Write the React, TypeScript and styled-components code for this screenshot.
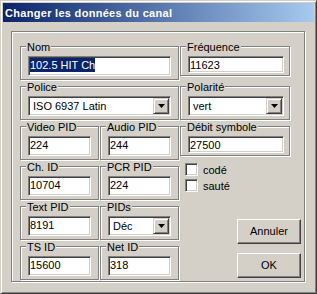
import React from "react";
import styled, { createGlobalStyle } from "styled-components";

const GlobalStyle = createGlobalStyle`
  html, body { margin: 0; padding: 0; background: #d4d0c8; }
  body { font-family: "Liberation Sans", Arial, sans-serif; font-size: 11px; color: #000; }
  * { box-sizing: border-box; }
`;

const Window = styled.div`
  width: 317px;
  height: 294px;
  background: #d4d0c8;
  border: 1px solid;
  border-color: #d4d0c8 #404040 #404040 #d4d0c8;
  box-shadow: inset 1px 1px 0 #fff, inset -1px -1px 0 #808080;
  padding: 2px;
  display: flex;
  flex-direction: column;
`;

const TitleBar = styled.div`
  height: 19px;
  background: linear-gradient(to right, #0a246a, #a6caf0);
  color: #fff;
  font-weight: bold;
  font-size: 11px;
  letter-spacing: 0.3px;
  line-height: 18px;
  padding: 1px 0 0 2px;
  white-space: nowrap;
`;

const Body = styled.div`
  padding: 9px 0 0 8px;
`;

const OuterGroup = styled.div`
  width: 294px;
  height: 251px;
  border: 1px solid #808080;
  box-shadow: inset 1px 1px 0 #fff, 1px 1px 0 #fff;
  padding: 14px 0 0 8px;
  display: flex;
`;

const LeftCol = styled.div`
  width: 160px;
  display: flex;
  flex-direction: column;
  gap: 6px;
`;

const Pair = styled.div`
  display: flex;
  gap: 1px;
`;

const RightCol = styled.div`
  width: 121px;
  display: flex;
  flex-direction: column;
`;

const Group = styled.div<{ $w: number; $h: number; $mb?: number }>`
  position: relative;
  width: ${(p) => p.$w}px;
  height: ${(p) => p.$h}px;
  margin-bottom: ${(p) => p.$mb ?? 0}px;
  border: 1px solid #808080;
  box-shadow: inset 1px 1px 0 #fff, 1px 1px 0 #fff;
  padding: 9px 0 0 7px;
`;

const Caption = styled.span`
  position: absolute;
  top: -6px;
  left: 5px;
  padding: 0 1px;
  line-height: 13px;
  background: #d4d0c8;
  white-space: nowrap;
`;

const Field = styled.div<{ $w: number; $h: number }>`
  width: ${(p) => p.$w}px;
  height: ${(p) => p.$h}px;
  background: #fff;
  border: 1px solid;
  border-color: #808080 #fff #fff #808080;
  box-shadow: inset 1px 1px 0 #404040, inset -1px -1px 0 #d4d0c8;
  padding: 1px 0 0 1px;
  line-height: 14px;
  white-space: nowrap;
  overflow: hidden;
`;

const Selected = styled.span`
  display: inline-block;
  background: #0a246a;
  color: #fff;
  line-height: 14px;
`;

const Combo = styled.div<{ $w: number }>`
  width: ${(p) => p.$w}px;
  height: 20px;
  background: #fff;
  border: 1px solid;
  border-color: #808080 #fff #fff #808080;
  box-shadow: inset 1px 1px 0 #404040, inset -1px -1px 0 #d4d0c8;
  padding: 1px;
  display: flex;
`;

const ComboText = styled.div`
  flex: 1;
  padding: 1px 0 0 3px;
  line-height: 14px;
  white-space: nowrap;
`;

const ArrowButton = styled.div`
  width: 16px;
  height: 16px;
  background: #d4d0c8;
  border: 1px solid;
  border-color: #d4d0c8 #404040 #404040 #d4d0c8;
  box-shadow: inset 1px 1px 0 #fff, inset -1px -1px 0 #808080;
  display: flex;
  align-items: center;
  justify-content: center;
`;

const CheckRow = styled.label<{ $mt: number }>`
  display: flex;
  align-items: center;
  gap: 5px;
  margin: ${(p) => p.$mt}px 0 0 5px;
  height: 13px;
`;

const CheckBox = styled.span`
  width: 13px;
  height: 13px;
  background: #fff;
  border: 1px solid;
  border-color: #808080 #fff #fff #808080;
  box-shadow: inset 1px 1px 0 #404040, inset -1px -1px 0 #d4d0c8;
`;

const Button = styled.div<{ $mt: number }>`
  width: 64px;
  height: 25px;
  margin: ${(p) => p.$mt}px 0 0 auto;
  border: 1px solid;
  border-color: #fff #404040 #404040 #fff;
  box-shadow: inset -1px -1px 0 #808080;
  display: flex;
  align-items: center;
  justify-content: center;
  line-height: 13px;
`;

const Arrow = () => (
  <svg width="7" height="4" viewBox="0 0 7 4">
    <path d="M0 0h7L3.5 4z" fill="#000" />
  </svg>
);

const TextGroup = ({
  label,
  value,
  w = 79,
  fw = 63,
  h = 34,
  fh = 20,
  mb,
}: {
  label: string;
  value: React.ReactNode;
  w?: number;
  fw?: number;
  h?: number;
  fh?: number;
  mb?: number;
}) => (
  <Group $w={w} $h={h} $mb={mb}>
    <Caption>{label}</Caption>
    <Field $w={fw} $h={fh}>{value}</Field>
  </Group>
);

const ComboGroup = ({
  label,
  value,
  w = 79,
  fw = 63,
  mb,
}: {
  label: string;
  value: string;
  w?: number;
  fw?: number;
  mb?: number;
}) => (
  <Group $w={w} $h={34} $mb={mb}>
    <Caption>{label}</Caption>
    <Combo $w={fw}>
      <ComboText>{value}</ComboText>
      <ArrowButton>
        <Arrow />
      </ArrowButton>
    </Combo>
  </Group>
);

export default function App() {
  return (
    <>
      <GlobalStyle />
      <Window>
        <TitleBar>Changer les données du canal</TitleBar>
        <Body>
          <OuterGroup>
            <LeftCol>
              <TextGroup label="Nom" value={<Selected>102.5 HIT Ch</Selected>} w={159} fw={143} />
              <ComboGroup label="Police" value="ISO 6937 Latin" w={159} fw={143} />
              <Pair>
                <TextGroup label="Video PID" value="224" />
                <TextGroup label="Audio PID" value="244" />
              </Pair>
              <Pair>
                <TextGroup label="Ch. ID" value="10704" />
                <TextGroup label="PCR PID" value="224" />
              </Pair>
              <Pair>
                <TextGroup label="Text PID" value="8191" />
                <ComboGroup label="PIDs" value="Déc" />
              </Pair>
              <Pair>
                <TextGroup label="TS ID" value="15600" />
                <TextGroup label="Net ID" value="318" />
              </Pair>
            </LeftCol>
            <RightCol>
              <TextGroup label="Fréquence" value="11623" w={110} fw={96} h={30} fh={17} mb={10} />
              <ComboGroup label="Polarité" value="vert" w={110} fw={96} mb={6} />
              <TextGroup label="Débit symbole" value="27500" w={110} fw={96} h={30} fh={17} />
              <CheckRow $mt={7}>
                <CheckBox />
                codé
              </CheckRow>
              <CheckRow $mt={3}>
                <CheckBox />
                sauté
              </CheckRow>
              <Button $mt={27}>Annuler</Button>
              <Button $mt={9}>OK</Button>
            </RightCol>
          </OuterGroup>
        </Body>
      </Window>
    </>
  );
}
